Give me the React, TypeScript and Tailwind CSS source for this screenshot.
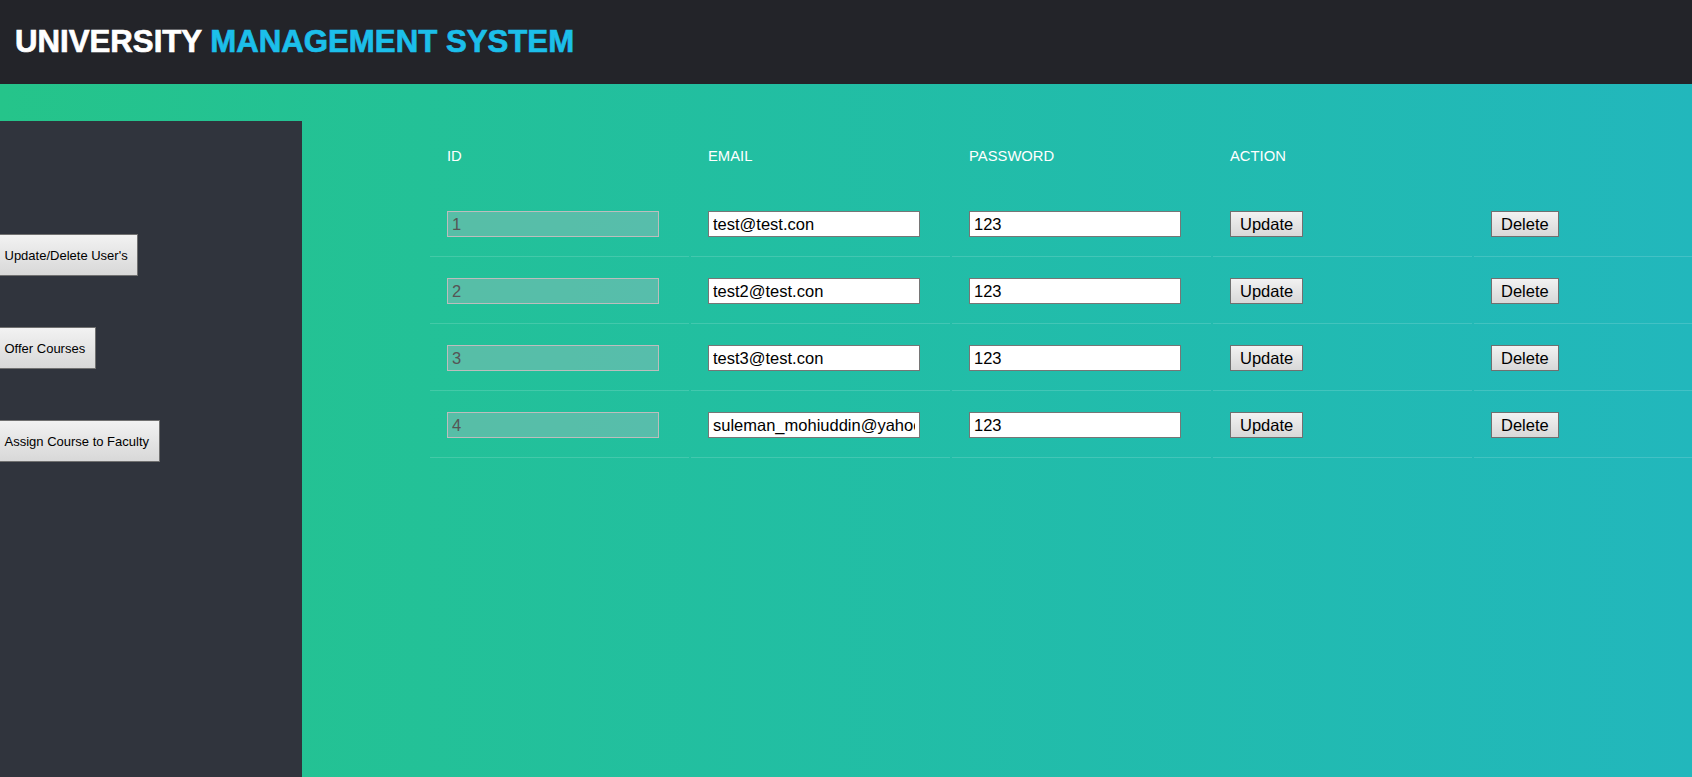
import React from 'react';

type User = { id: number; email: string; password: string };

const users: User[] = [
    { id: 1, email: 'test@test.con', password: '123' },
    { id: 2, email: 'test2@test.con', password: '123' },
    { id: 3, email: 'test3@test.con', password: '123' },
    { id: 4, email: 'suleman_mohiuddin@yahoo.com', password: '123' },
];

const btn =
    'border border-[#707070] bg-gradient-to-b from-[#f2f2f2] to-[#d8d8d8] text-black leading-none';

function SideButton({ label }: { label: string }) {
    return (
        <button className={`${btn} -ml-[6px] h-[42px] px-[9.5px] text-[13px] self-start`}>
            {label}
        </button>
    );
}

export default function App() {
    return (
        <div className="h-[777px] w-[1692px] overflow-hidden font-['Liberation_Sans',Arial,sans-serif]">
            <header className="flex h-[84px] items-center bg-[#232429] pl-[15px]">
                <h1 className="text-[31.2px] font-bold [-webkit-text-stroke:0.7px_currentColor]">
                    <span className="text-white">UNIVERSITY </span>
                    <span className="text-[#1cbfea]">MANAGEMENT SYSTEM</span>
                </h1>
            </header>

            <div className="flex h-[693px] bg-gradient-to-r from-[#25c48a] to-[#22b7bc] pt-[37px]">
                <aside className="flex w-[302px] shrink-0 flex-col gap-[51px] bg-[#30343d] pt-[113px]">
                    <SideButton label="Update/Delete User's" />
                    <SideButton label="Offer Courses" />
                    <SideButton label="Assign Course to Faculty" />
                </aside>

                <main className="flex-1 overflow-hidden pl-[126px]">
                    <table className="w-[1307px] table-fixed border-separate border-spacing-[2px] text-left">
                        <thead>
                            <tr>
                                {['ID', 'EMAIL', 'PASSWORD', 'ACTION', ''].map((h, i) => (
                                    <th
                                        key={i}
                                        className="h-[67px] pl-[17px] align-middle text-[14.8px] font-normal text-white"
                                    >
                                        {h}
                                    </th>
                                ))}
                            </tr>
                        </thead>
                        <tbody>
                            {users.map((u) => (
                                <tr key={u.id}>
                                    <td className="border-b border-white/15 py-[19px] pl-[17px]">
                                        <input
                                            disabled
                                            defaultValue={u.id}
                                            className="block h-[26px] w-[212px] border border-[#bdbdbd] bg-[rgba(185,185,195,0.35)] px-[4px] text-[16.5px] text-[#555]"
                                        />
                                    </td>
                                    <td className="border-b border-white/15 py-[19px] pl-[17px]">
                                        <input
                                            defaultValue={u.email}
                                            className="block h-[26px] w-[212px] border border-[#767676] bg-white px-[4px] text-[16.5px] text-black"
                                        />
                                    </td>
                                    <td className="border-b border-white/15 py-[19px] pl-[17px]">
                                        <input
                                            defaultValue={u.password}
                                            className="block h-[26px] w-[212px] border border-[#767676] bg-white px-[4px] text-[16.5px] text-black"
                                        />
                                    </td>
                                    <td className="border-b border-white/15 py-[19px] pl-[17px]">
                                        <button className={`${btn} block h-[26px] px-[9px] text-[16.5px]`}>Update</button>
                                    </td>
                                    <td className="border-b border-white/15 py-[19px] pl-[17px]">
                                        <button className={`${btn} block h-[26px] px-[9px] text-[16.5px]`}>Delete</button>
                                    </td>
                                </tr>
                            ))}
                        </tbody>
                    </table>
                </main>
            </div>
        </div>
    );
}
